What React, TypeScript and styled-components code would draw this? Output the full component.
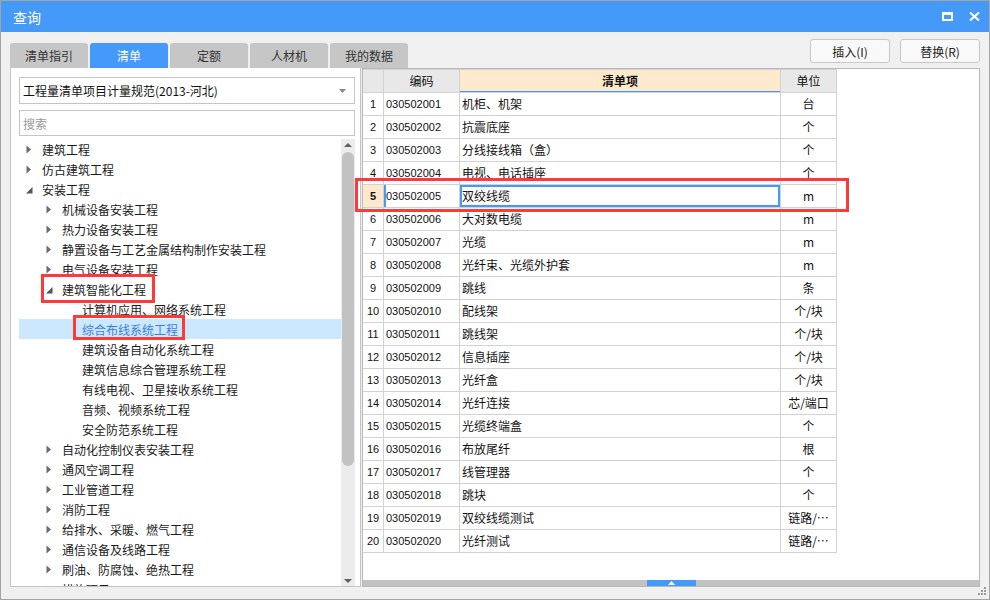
import React from 'react';
import styled, { createGlobalStyle } from 'styled-components';

const GlobalStyle = createGlobalStyle`
  html, body { margin: 0; padding: 0; background: #ffffff; }
  body { font-family: "Noto Sans CJK SC", "Microsoft YaHei", sans-serif; color: #222; }
  * { box-sizing: border-box; }
`;

const BLUE = '#4599f8';

const Window = styled.div`
  position: relative;
  width: 990px;
  height: 600px;
  border: 1px solid #a4a4a4;
  background: #f0f0f0;
  display: flex;
  flex-direction: column;
  overflow: hidden;
`;

const TitleBar = styled.div`
  height: 31px;
  background: ${BLUE};
  display: flex;
  align-items: center;
  padding-left: 12px;
  color: #fff;
  font-size: 14px;
  flex-shrink: 0;
`;

const TitleText = styled.span`
  line-height: 16px;
`;

const TitleIcons = styled.div`
  margin-left: auto;
  display: flex;
  align-items: center;
  gap: 16px;
  padding-right: 9px;
`;

const Body = styled.div`
  flex: 1;
  display: flex;
  flex-direction: column;
  padding: 0 9px 12px 9px;
  min-height: 0;
`;

const TopRow = styled.div`
  height: 36px;
  display: flex;
  justify-content: space-between;
  flex-shrink: 0;
`;

const Tabs = styled.div`
  display: flex;
  gap: 2px;
  align-self: flex-end;
`;

const Tab = styled.div<{ $active?: boolean }>`
  width: 78px;
  height: 25px;
  border-radius: 3px 3px 0 0;
  background: ${(p) => (p.$active ? BLUE : '#c6c6c6')};
  color: ${(p) => (p.$active ? '#fff' : '#333')};
  font-size: 12px;
  display: flex;
  align-items: center;
  justify-content: center;
`;

const Buttons = styled.div`
  display: flex;
  gap: 10px;
  margin-top: 7px;
  align-self: flex-start;
`;

const Button = styled.div`
  width: 80px;
  height: 24px;
  border: 1px solid #c8c8c8;
  border-radius: 3px;
  background: #f9f9f9;
  font-size: 12px;
  color: #222;
  display: flex;
  align-items: center;
  justify-content: center;
`;

const Content = styled.div`
  flex: 1;
  display: flex;
  gap: 1px;
  min-height: 0;
`;

const LeftPanel = styled.div`
  width: 351px;
  background: #fff;
  border: 1px solid #c4c4c4;
  border-top: none;
  padding: 9px 5px 0 8px;
  display: flex;
  flex-direction: column;
  min-height: 0;
`;

const Select = styled.div`
  height: 27px;
  border: 1px solid #c4c4c4;
  display: flex;
  align-items: center;
  padding: 0 8px 0 3px;
  font-size: 12px;
  color: #111;
  flex-shrink: 0;
`;

const SelectText = styled.span`
  flex: 1;
`;

const Search = styled.div`
  margin-top: 6px;
  height: 26px;
  border: 1px solid #c4c4c4;
  display: flex;
  align-items: center;
  padding-left: 3px;
  font-size: 12px;
  color: #9a9a9a;
  flex-shrink: 0;
`;

const TreeArea = styled.div`
  margin-top: 3px;
  flex: 1;
  display: flex;
  min-height: 0;
  overflow: hidden;
`;

const TreeList = styled.div`
  flex: 1;
  overflow: hidden;
`;

const TreeRow = styled.div<{ $level: number; $selected?: boolean }>`
  height: 20px;
  display: flex;
  align-items: center;
  padding-left: ${(p) => 5 + p.$level * 20}px;
  background: ${(p) => (p.$selected ? '#cce8ff' : 'transparent')};
  color: ${(p) => (p.$selected ? '#3a7ee4' : '#1a1a1a')};
  font-size: 12px;
  white-space: nowrap;
`;

const ArrowSlot = styled.span`
  width: 18px;
  height: 20px;
  display: flex;
  align-items: center;
  padding-left: 2px;
  flex-shrink: 0;
`;

const Scrollbar = styled.div`
  width: 14px;
  background: #ececec;
  display: flex;
  flex-direction: column;
  align-items: center;
  flex-shrink: 0;
`;

const ScrollArrow = styled.svg<{ $top?: boolean }>`
  margin-top: ${(p) => (p.$top ? '4px' : '0')};
  margin-bottom: ${(p) => (p.$top ? '0' : '3px')};
`;

const Thumb = styled.div`
  margin-top: 5px;
  width: 12px;
  height: 314px;
  border-radius: 6px;
  background: #c2c2c2;
`;

const Spacer = styled.div`
  flex: 1;
`;

const RightPanel = styled.div`
  flex: 1;
  background: #fff;
  border: 1px solid #b8b8b8;
  display: flex;
  flex-direction: column;
  min-height: 0;
`;

const GridArea = styled.div`
  flex: 1;
  overflow: hidden;
  min-height: 0;
`;

const Grid = styled.div`
  width: 474px;
  border-top: 1px solid #d2d2d2;
`;

const GridRow = styled.div`
  display: grid;
  grid-template-columns: 21px 76px 321px 56px;
  height: 23px;
`;

const Cell = styled.div<{
  $align?: 'left' | 'center';
  $bg?: string;
  $bold?: boolean;
  $mono?: boolean;
  $sel?: boolean;
  $leftMark?: boolean;
  $headSel?: boolean;
}>`
  border-right: 1px solid #d2d2d2;
  border-bottom: 1px solid #d2d2d2;
  background: ${(p) => p.$bg || '#fff'};
  font-size: ${(p) => (p.$mono ? '11px' : '12px')};
  font-family: ${(p) =>
    p.$mono ? '"Liberation Sans", "Noto Sans CJK SC", sans-serif' : '"Noto Sans CJK SC", sans-serif'};
  font-weight: ${(p) => (p.$bold ? 'bold' : 'normal')};
  text-align: ${(p) => p.$align || 'left'};
  padding: 0 ${(p) => (p.$align === 'center' ? '0' : '2px')};
  line-height: 22px;
  white-space: nowrap;
  overflow: hidden;
  color: #111;
  box-shadow: ${(p) =>
    p.$sel
      ? `inset 0 0 0 2px ${BLUE}`
      : p.$leftMark
      ? `inset 2px 0 0 ${BLUE}`
      : p.$headSel
      ? `inset 0 -1px 0 ${BLUE}`
      : 'none'};
`;

const Splitter = styled.div`
  height: 6px;
  background: #c2c2c2;
  display: flex;
  justify-content: center;
  flex-shrink: 0;
`;

const SplitterHandle = styled.div`
  width: 49px;
  height: 6px;
  background: ${BLUE};
  display: flex;
  align-items: center;
  justify-content: center;
`;

const Mark = styled.div`
  position: absolute;
  border: 3px solid #ff3838;
  pointer-events: none;
`;

const Grip = styled.svg`
  position: absolute;
  right: 2px;
  bottom: 3px;
`;

type Node = { label: string; level: number; state: 'c' | 'e' | 'l'; selected?: boolean };

const tree: Node[] = [
  { label: '建筑工程', level: 0, state: 'c' },
  { label: '仿古建筑工程', level: 0, state: 'c' },
  { label: '安装工程', level: 0, state: 'e' },
  { label: '机械设备安装工程', level: 1, state: 'c' },
  { label: '热力设备安装工程', level: 1, state: 'c' },
  { label: '静置设备与工艺金属结构制作安装工程', level: 1, state: 'c' },
  { label: '电气设备安装工程', level: 1, state: 'c' },
  { label: '建筑智能化工程', level: 1, state: 'e' },
  { label: '计算机应用、网络系统工程', level: 2, state: 'l' },
  { label: '综合布线系统工程', level: 2, state: 'l', selected: true },
  { label: '建筑设备自动化系统工程', level: 2, state: 'l' },
  { label: '建筑信息综合管理系统工程', level: 2, state: 'l' },
  { label: '有线电视、卫星接收系统工程', level: 2, state: 'l' },
  { label: '音频、视频系统工程', level: 2, state: 'l' },
  { label: '安全防范系统工程', level: 2, state: 'l' },
  { label: '自动化控制仪表安装工程', level: 1, state: 'c' },
  { label: '通风空调工程', level: 1, state: 'c' },
  { label: '工业管道工程', level: 1, state: 'c' },
  { label: '消防工程', level: 1, state: 'c' },
  { label: '给排水、采暖、燃气工程', level: 1, state: 'c' },
  { label: '通信设备及线路工程', level: 1, state: 'c' },
  { label: '刷油、防腐蚀、绝热工程', level: 1, state: 'c' },
  { label: '措施项目', level: 1, state: 'c' },
];

const rows: [string, string, string][] = [
  ['030502001', '机柜、机架', '台'],
  ['030502002', '抗震底座', '个'],
  ['030502003', '分线接线箱（盒）', '个'],
  ['030502004', '电视、电话插座', '个'],
  ['030502005', '双绞线缆', 'm'],
  ['030502006', '大对数电缆', 'm'],
  ['030502007', '光缆', 'm'],
  ['030502008', '光纤束、光缆外护套', 'm'],
  ['030502009', '跳线', '条'],
  ['030502010', '配线架', '个/块'],
  ['030502011', '跳线架', '个/块'],
  ['030502012', '信息插座', '个/块'],
  ['030502013', '光纤盒', '个/块'],
  ['030502014', '光纤连接', '芯/端口'],
  ['030502015', '光缆终端盒', '个'],
  ['030502016', '布放尾纤', '根'],
  ['030502017', '线管理器', '个'],
  ['030502018', '跳块', '个'],
  ['030502019', '双绞线缆测试', '链路/…'],
  ['030502020', '光纤测试', '链路/…'],
];

const Arrow = ({ state }: { state: Node['state'] }) => {
  if (state === 'c')
    return (
      <svg width="6" height="9" viewBox="0 0 6 9">
        <polygon points="0.5,0.5 5,4.5 0.5,8.5" fill="#6b6b6b" />
      </svg>
    );
  if (state === 'e')
    return (
      <svg width="7" height="10" viewBox="0 0 7 10">
        <polygon points="6.5,3 6.5,9.5 0,9.5" fill="#555" />
      </svg>
    );
  return null;
};

export default function App() {
  return (
    <>
      <GlobalStyle />
      <Window>
        <TitleBar>
          <TitleText>查询</TitleText>
          <TitleIcons>
            <svg width="11" height="9" viewBox="0 0 11 9">
              <rect x="1" y="1.5" width="9" height="6.5" fill="none" stroke="#fff" strokeWidth="2" />
              <rect x="0" y="0" width="11" height="3" fill="#fff" />
            </svg>
            <svg width="11" height="9" viewBox="0 0 11 9">
              <path d="M1 0.5 L10 8.5 M10 0.5 L1 8.5" stroke="#fff" strokeWidth="2" />
            </svg>
          </TitleIcons>
        </TitleBar>
        <Body>
          <TopRow>
            <Tabs>
              <Tab>清单指引</Tab>
              <Tab $active>清单</Tab>
              <Tab>定额</Tab>
              <Tab>人材机</Tab>
              <Tab>我的数据</Tab>
            </Tabs>
            <Buttons>
              <Button>插入(I)</Button>
              <Button>替换(R)</Button>
            </Buttons>
          </TopRow>
          <Content>
            <LeftPanel>
              <Select>
                <SelectText>工程量清单项目计量规范(2013-河北)</SelectText>
                <svg width="7" height="4" viewBox="0 0 7 4">
                  <polygon points="0,0 7,0 3.5,4" fill="#8a8a8a" />
                </svg>
              </Select>
              <Search>搜索</Search>
              <TreeArea>
                <TreeList>
                  {tree.map((n) => (
                    <TreeRow key={n.label} $level={n.level} $selected={n.selected}>
                      <ArrowSlot>
                        <Arrow state={n.state} />
                      </ArrowSlot>
                      <span>{n.label}</span>
                    </TreeRow>
                  ))}
                </TreeList>
                <Scrollbar>
                  <ScrollArrow $top width="8" height="4" viewBox="0 0 8 4">
                    <polygon points="0,4 8,4 4,0" fill="#606060" />
                  </ScrollArrow>
                  <Thumb />
                  <Spacer />
                  <ScrollArrow width="8" height="4" viewBox="0 0 8 4">
                    <polygon points="0,0 8,0 4,4" fill="#606060" />
                  </ScrollArrow>
                </Scrollbar>
              </TreeArea>
            </LeftPanel>
            <RightPanel>
              <GridArea>
                <Grid>
                  <GridRow>
                    <Cell $bg="#e8e8e8" />
                    <Cell $bg="#e8e8e8" $align="center">编码</Cell>
                    <Cell $bg="#fee9cd" $align="center" $bold $headSel>清单项</Cell>
                    <Cell $bg="#e8e8e8" $align="center">单位</Cell>
                  </GridRow>
                  {rows.map((r, i) => {
                    const sel = i === 4;
                    return (
                      <GridRow key={r[0]}>
                        <Cell $align="center" $mono $bg={sel ? '#fee9cd' : '#fff'} $bold={sel}>
                          {i + 1}
                        </Cell>
                        <Cell $mono $leftMark={sel}>{r[0]}</Cell>
                        <Cell $sel={sel}>{r[1]}</Cell>
                        <Cell $align="center">{r[2]}</Cell>
                      </GridRow>
                    );
                  })}
                </Grid>
              </GridArea>
              <Splitter>
                <SplitterHandle>
                  <svg width="7" height="4" viewBox="0 0 7 4">
                    <polygon points="0,4 7,4 3.5,0" fill="#fff" />
                  </svg>
                </SplitterHandle>
              </Splitter>
            </RightPanel>
          </Content>
        </Body>
        <Mark style={{ left: 354, top: 177, width: 494, height: 34 }} />
        <Mark style={{ left: 40, top: 273, width: 114, height: 29 }} />
        <Mark style={{ left: 72, top: 314, width: 112, height: 25 }} />
        <Grip width="10" height="10" viewBox="0 0 10 10">
          <rect x="7" y="1" width="2" height="2" fill="#9a9a9a" />
          <rect x="4" y="4" width="2" height="2" fill="#9a9a9a" />
          <rect x="7" y="4" width="2" height="2" fill="#9a9a9a" />
          <rect x="1" y="7" width="2" height="2" fill="#9a9a9a" />
          <rect x="4" y="7" width="2" height="2" fill="#9a9a9a" />
          <rect x="7" y="7" width="2" height="2" fill="#9a9a9a" />
        </Grip>
      </Window>
    </>
  );
}
